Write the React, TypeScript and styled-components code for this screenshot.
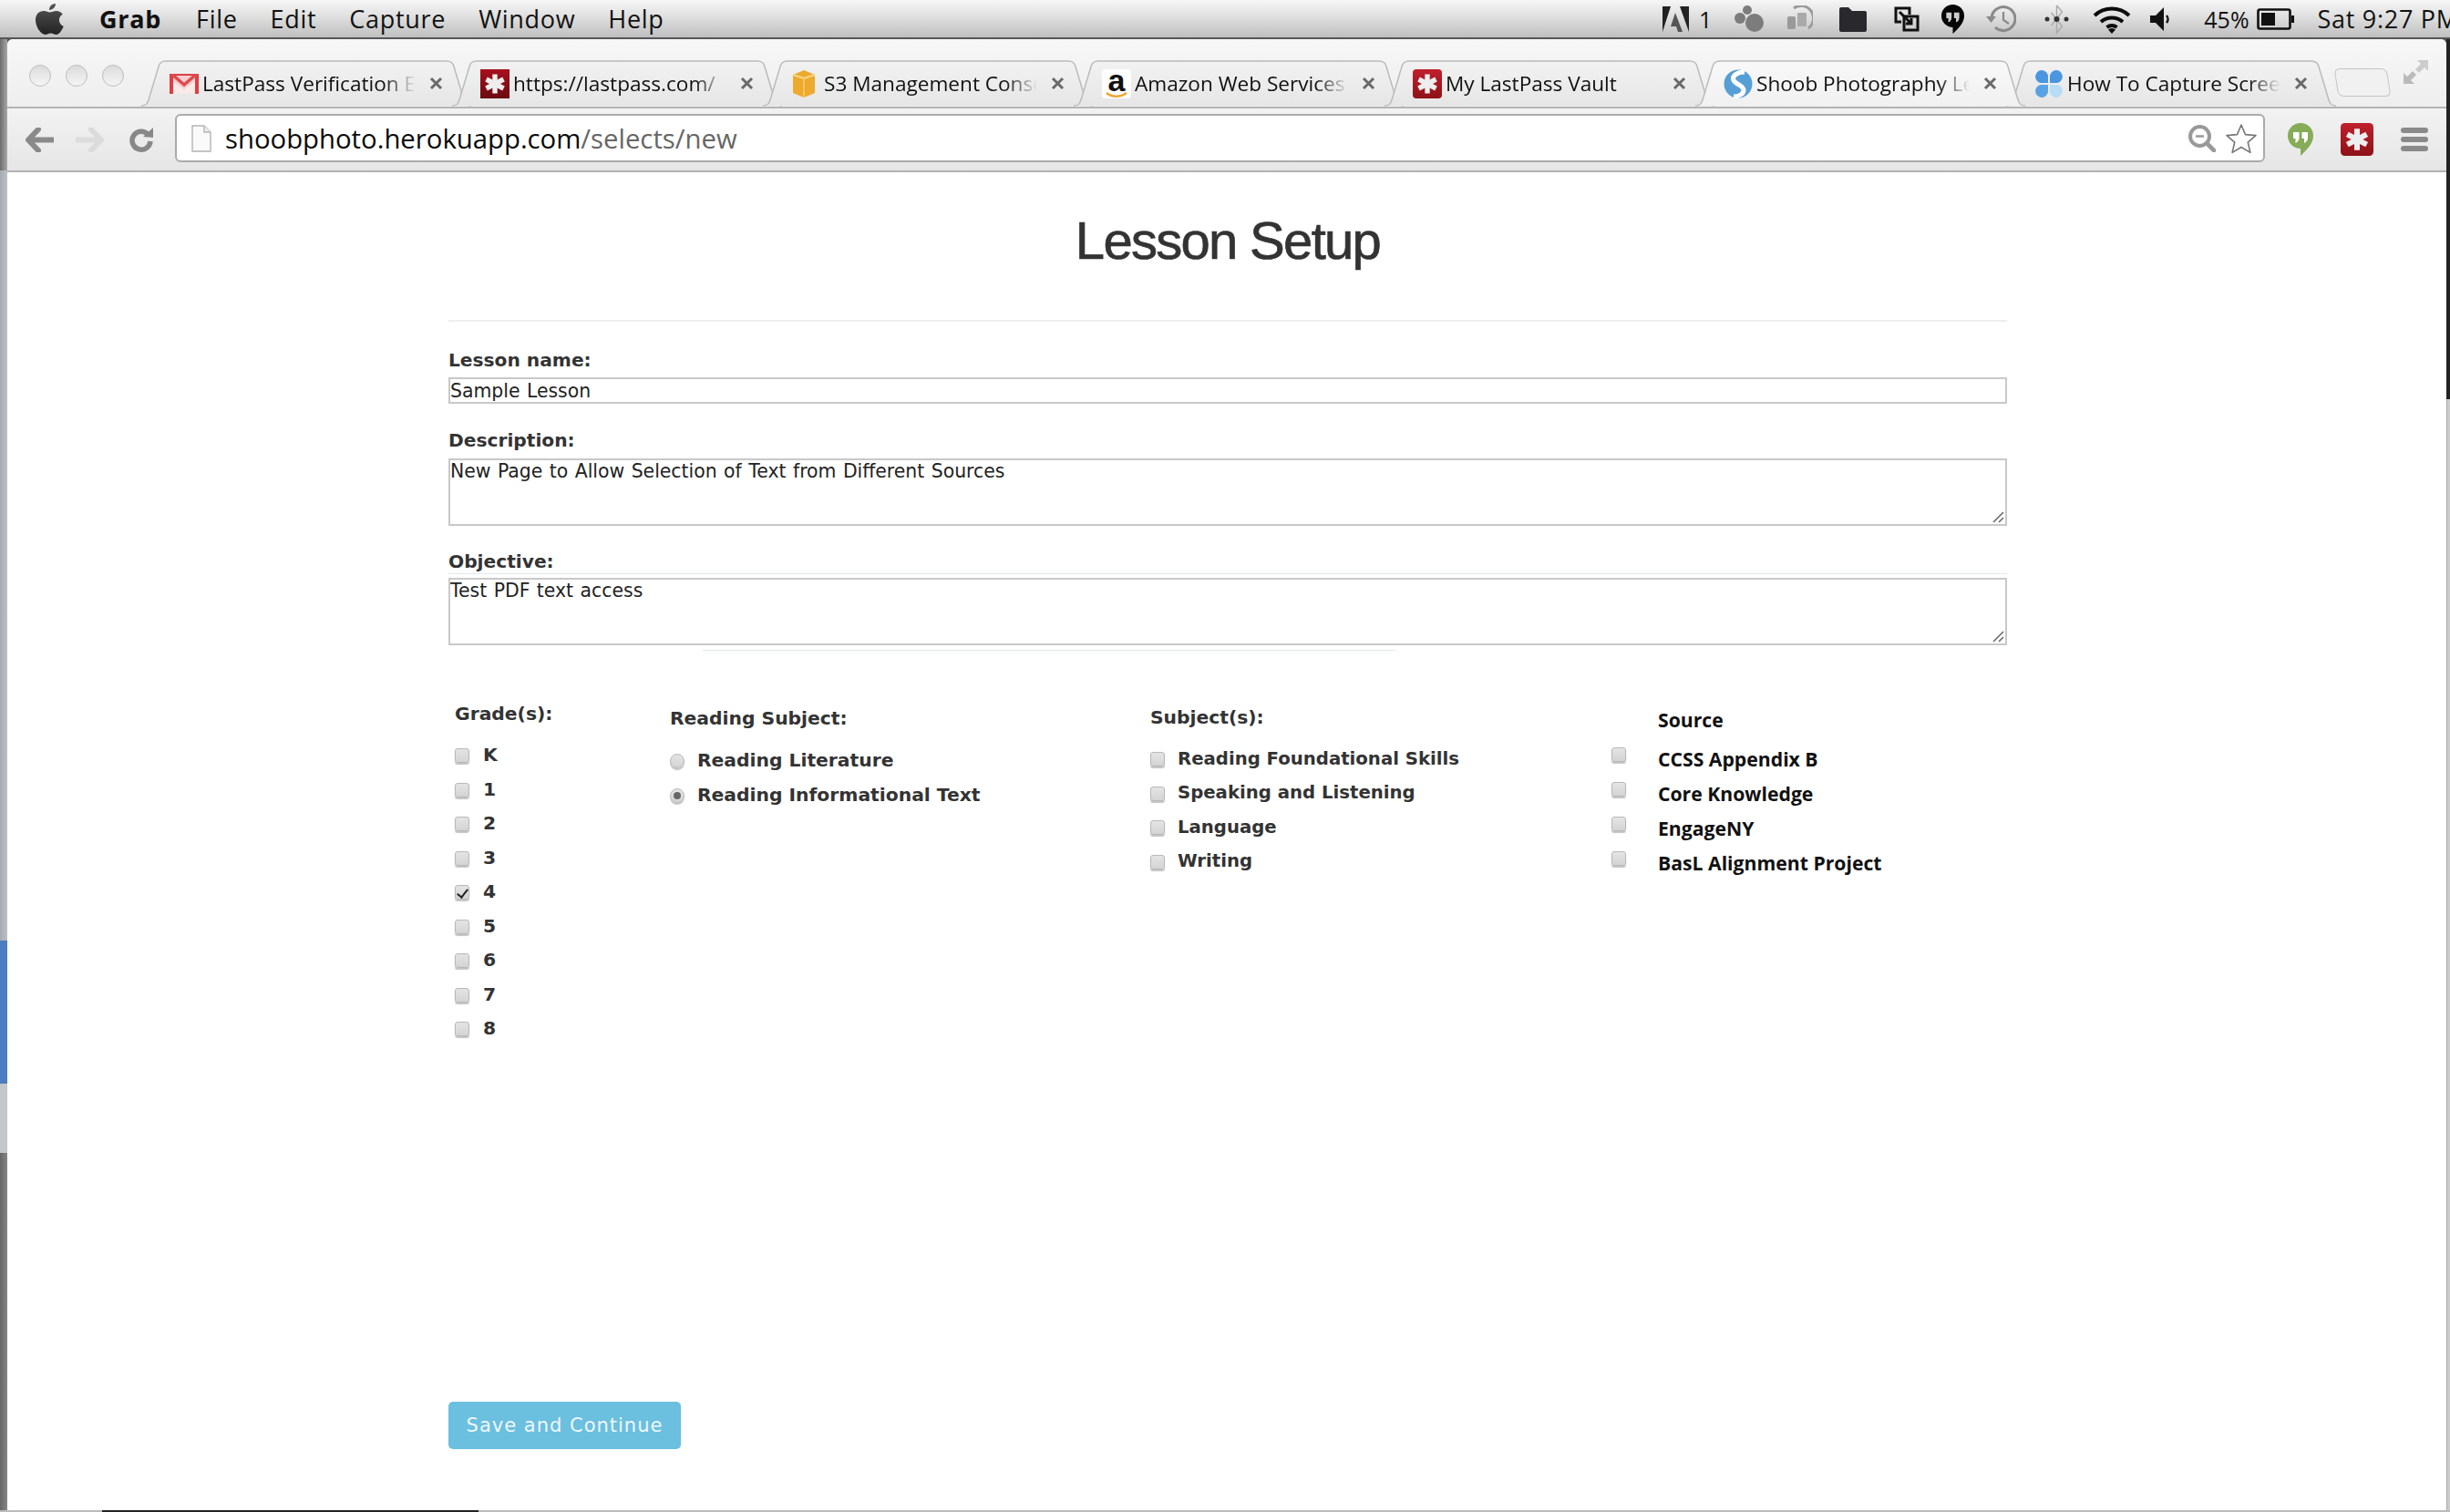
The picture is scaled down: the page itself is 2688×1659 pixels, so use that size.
import React from "react";
import styled, { createGlobalStyle } from "styled-components";

const GlobalStyle = createGlobalStyle`
  html, body {
    margin: 0;
    padding: 0;
    background: #555;
  }
  #root {
    width: 2688px;
    height: 1659px;
    overflow: hidden;
  }
  * {
    box-sizing: border-box;
  }
`;

const CHROME_FONT = `"Open Sans", "Noto Sans", sans-serif`;
const PAGE_FONT = `"DejaVu Sans", Verdana, sans-serif`;

/* ---------- icons ---------- */

function LastPassIcon({ size, square }: { size: number; square?: boolean }) {
  const id = square ? "lp-dark" : "lp-red";
  return (
    <svg width={size} height={size} viewBox="0 0 32 32">
      <defs>
        <linearGradient id={id} x1="0" y1="0" x2="0" y2="1">
          <stop offset="0" stopColor={square ? "#a8101c" : "#c0202c"} />
          <stop offset="1" stopColor={square ? "#6c0a10" : "#8e1218"} />
        </linearGradient>
      </defs>
      <rect width="32" height="32" rx={square ? 0 : 4} fill={`url(#${id})`} />
      <g stroke="#eee" strokeWidth="5.4" strokeLinecap="butt">
        <path d="M16 5.5v21" />
        <path d="M6.5 11l19 10" />
        <path d="M25.5 11l-19 10" />
      </g>
    </svg>
  );
}

function GmailIcon() {
  return (
    <svg width="32" height="22" viewBox="0 0 32 22">
      <rect width="32" height="22" fill="#f4cfcf" />
      <path d="M4 22V8l12 9 12-9v14" fill="#f9e9e9" />
      <path d="M0 0h4v22H0zM28 0h4v22h-4z" fill="#dc4044" />
      <path d="M0 0h32v2H0z" fill="#dc4044" />
      <path d="M2 0l14 12L30 0" fill="none" stroke="#e04a4e" strokeWidth="3.600" />
    </svg>
  );
}

function BoxIcon() {
  return (
    <svg width="28" height="32" viewBox="0 0 28 32">
      <path d="M2 6l12-5 12 5v20l-12 5-12-5z" fill="#edaa2e" />
      <path d="M2 6l12 4 12-4" fill="none" stroke="#f9d98a" strokeWidth="2" />
      <path d="M14 10v21" stroke="#f6c35c" strokeWidth="2" />
    </svg>
  );
}

function ShoobIcon() {
  return (
    <svg width="32" height="32" viewBox="0 0 32 32">
      <circle cx="16" cy="16" r="15.5" fill="#569fd6" />
      <path
        d="M23 3C15 3 9 7 11 12c2 5 11 5 11 11 0 4-5 7-11 7"
        fill="none"
        stroke="#fff"
        strokeWidth="5"
      />
    </svg>
  );
}

function PetalIcon() {
  return (
    <svg width="32" height="32" viewBox="0 0 32 32">
      <path d="M15 15H7a7 7 0 1 1 8-8z" fill="#4a96e0" />
      <path d="M17 15h8a7 7 0 1 0-8-8z" fill="#4a96e0" />
      <path d="M15 17H7a7 7 0 1 0 8 8z" fill="#5aa2e4" />
      <path d="M17 17h8a7 7 0 1 1-8 8z" fill="#b9dcf6" />
    </svg>
  );
}

function CloseIcon() {
  return (
    <svg width="15" height="15" viewBox="0 0 15 15">
      <path d="M2 2l11 11M13 2L2 13" stroke="#6a6a6a" strokeWidth="3" />
    </svg>
  );
}

function ArrowIcon({ flip, color }: { flip?: boolean; color: string }) {
  return (
    <svg
      width="31"
      height="27"
      viewBox="0 0 31 27"
      style={flip ? { transform: "scaleX(-1)" } : undefined}
    >
      <path
        d="M14 2L3 13.5 14 25M4 13.5h26"
        fill="none"
        stroke={color}
        strokeWidth="6"
        strokeLinejoin="round"
        strokeLinecap="round"
      />
    </svg>
  );
}

function ReloadIcon() {
  return (
    <svg width="27" height="28" viewBox="0 0 27 28">
      <path
        d="M20 8a10 10 0 1 0 3 8"
        fill="none"
        stroke="#888"
        strokeWidth="5.5"
      />
      <path d="M15 11L26 1v11z" fill="#888" />
    </svg>
  );
}

function PageIcon() {
  return (
    <svg width="22" height="30" viewBox="0 0 22 30">
      <path
        d="M1 1h13l7 7v21H1z"
        fill="#fafafa"
        stroke="#b4b4b4"
        strokeWidth="1.4"
      />
      <path d="M14 1v7h7" fill="#eee" stroke="#b4b4b4" strokeWidth="1.4" />
    </svg>
  );
}

function ZoomOutIcon() {
  return (
    <svg width="30" height="30" viewBox="0 0 30 30">
      <circle cx="12.5" cy="12.5" r="10.5" fill="none" stroke="#999" strokeWidth="4" />
      <path d="M8 12.5h9" stroke="#999" strokeWidth="2.4" />
      <path d="M20 20l8 8" stroke="#999" strokeWidth="4.6" strokeLinecap="round" />
    </svg>
  );
}

function StarIcon() {
  return (
    <svg width="36" height="34" viewBox="0 0 36 34">
      <path
        d="M18 2l4.5 10.6 11.5 1-8.700 7.600 2.600 11.200L18 26.500 8.100 32.400l2.600-11.200L2 13.600l11.500-1z"
        fill="#fff"
        stroke="#777"
        strokeWidth="1.6"
        strokeLinejoin="round"
      />
    </svg>
  );
}

function HangoutsIcon({ fill, mark, w, h }: { fill: string; mark: string; w: number; h: number }) {
  return (
    <svg width={w} height={h} viewBox="0 0 28 36">
      <path d="M14 0a14 14 0 0 1 14 14c0 8-6 14-13 21l-1 1V28A14 14 0 0 1 14 0z" fill={fill} />
      <path d="M6 10h6.500v6c0 3-1.500 5-4 6v-5H6zM15.500 10H22v6c0 3-1.500 5-4 6v-5h-2.500z" fill={mark} />
    </svg>
  );
}

function MenuIcon() {
  return (
    <svg width="30" height="28" viewBox="0 0 30 28">
      <rect y="1" width="30" height="6" rx="3" fill="#8a8a8a" />
      <rect y="11" width="30" height="6" rx="3" fill="#8a8a8a" />
      <rect y="21" width="30" height="6" rx="3" fill="#8a8a8a" />
    </svg>
  );
}

function ExpandIcon() {
  return (
    <svg width="29" height="28" viewBox="0 0 29 28">
      <path d="M16 1h12v12l-4-4-6 6-4-4 6-6z" fill="#ccc" />
      <path d="M1 27V15l4 4 6-6 4 4-6 6 4 4z" fill="#bbb" />
    </svg>
  );
}

function AppleIcon() {
  return (
    <svg width="31" height="35" viewBox="0 0 31 35">
      <defs>
        <linearGradient id="apple-shade" x1="0" y1="0" x2="0" y2="1">
          <stop offset="0" stopColor="#555" />
          <stop offset="1" stopColor="#222" />
        </linearGradient>
      </defs>
      <path
        d="M22 1c.3 3-2.800 7-7 7 0-4 3-7 7-7zM9 9c3 0 4.500 1.600 6.500 1.600S20 9 23 9c2.500 0 5 1.200 6.700 3.600-5.500 3.300-4.700 11 1 13.400-2 4.500-4.700 9-8 9-2.300 0-3.200-1.500-6-1.500s-3.800 1.500-6 1.500C5.700 35 0 26 0 19 0 12.500 4 9 9 9z"
        fill="url(#apple-shade)"
      />
    </svg>
  );
}

function AdobeIcon() {
  return (
    <svg width="29" height="30" viewBox="0 0 29 30">
      <path d="M0 1h9L0 29z" fill="#222" />
      <path d="M19 1h10v28z" fill="#222" />
      <path d="M14 8l8 21h-5l-2-6h-6z" fill="#555" />
    </svg>
  );
}

function ClusterIcon() {
  return (
    <svg width="33" height="32" viewBox="0 0 33 32">
      <g fill="#7c7c7c">
        <circle cx="15" cy="6" r="5" />
        <circle cx="7" cy="15" r="6" />
        <circle cx="23" cy="20" r="10" />
      </g>
    </svg>
  );
}

function SyncWatchIcon() {
  return (
    <svg width="29" height="30" viewBox="0 0 29 30">
      <path d="M8 3a13 13 0 0 1 16 22" fill="none" stroke="#9a9a9a" strokeWidth="3" />
      <rect x="1" y="12" width="9" height="14" rx="2" fill="#9a9a9a" />
      <rect x="12" y="8" width="10" height="15" rx="1" fill="#aaa" />
    </svg>
  );
}

function FolderIcon() {
  return (
    <svg width="30" height="28" viewBox="0 0 30 28">
      <path d="M0 3a2 2 0 0 1 2-2h8l4 4h14a2 2 0 0 1 2 2v19a2 2 0 0 1-2 2H2a2 2 0 0 1-2-2z" fill="#29282c" />
    </svg>
  );
}

function TransferIcon() {
  return (
    <svg width="28" height="28" viewBox="0 0 28 28">
      <g fill="none" stroke="#111" strokeWidth="3">
        <path d="M8 17H2V2h15v7" />
        <path d="M11 11h15v15H11z" />
        <path d="M6 6l13 13M19 13v6h-6" />
      </g>
    </svg>
  );
}

function TimeMachineIcon() {
  return (
    <svg width="33" height="32" viewBox="0 0 33 32">
      <path d="M6 15a13 13 0 1 1 4 10" fill="none" stroke="#8a8a8a" strokeWidth="3" />
      <path d="M0 13h11l-5.500 7z" fill="#8a8a8a" />
      <path d="M19 8v9l6 4" fill="none" stroke="#8a8a8a" strokeWidth="2.200" />
    </svg>
  );
}

function BluetoothIcon() {
  return (
    <svg width="27" height="34" viewBox="0 0 27 34">
      <path d="M13.500 2v30l6-7-12-15M13.500 2l6 7-12 15" fill="none" stroke="#aaa" strokeWidth="1.400" />
      <circle cx="3" cy="17" r="2.500" fill="#333" />
      <circle cx="13.500" cy="17" r="3" fill="#333" />
      <circle cx="24" cy="17" r="2.500" fill="#333" />
    </svg>
  );
}

function WifiIcon() {
  return (
    <svg width="42" height="32" viewBox="0 0 42 32">
      <g fill="none" stroke="#0c0c0c" strokeWidth="4">
        <path d="M2 12a28 28 0 0 1 38 0" />
        <path d="M9 19a18 18 0 0 1 24 0" />
        <path d="M15.500 25a9 9 0 0 1 11 0" />
      </g>
      <path d="M21 32l-4-4.500a6 6 0 0 1 8 0z" fill="#0c0c0c" />
    </svg>
  );
}

function SpeakerIcon() {
  return (
    <svg width="24" height="28" viewBox="0 0 24 28">
      <path d="M1 10h6l9-9v26l-9-9H1z" fill="#111" />
      <path d="M19 10a6 6 0 0 1 0 8" fill="none" stroke="#111" strokeWidth="2.500" />
    </svg>
  );
}

function BatteryIcon() {
  return (
    <svg width="42" height="24" viewBox="0 0 42 24">
      <rect x="1.500" y="1.500" width="35" height="21" rx="2" fill="none" stroke="#111" strokeWidth="2.600" />
      <rect x="5" y="5" width="15" height="14" fill="#111" />
      <rect x="38" y="8" width="3" height="8" fill="#111" />
    </svg>
  );
}

function AmazonIcon() {
  return (
    <AmazonMark>
      a
      <svg width="24" height="7" viewBox="0 0 24 7">
        <path d="M1 1c6 5 15 5 22 0" fill="none" stroke="#eda62e" strokeWidth="2.400" />
      </svg>
    </AmazonMark>
  );
}

function GripIcon() {
  return (
    <GripMark width="14" height="14" viewBox="0 0 14 14">
      <path d="M2 13L13 2M8 13l5-5" stroke="#666" strokeWidth="1.500" />
    </GripMark>
  );
}

function TabShape({ active }: { active?: boolean }) {
  const id = active ? "tab-on" : "tab-off";
  return (
    <TabBack viewBox="0 0 362 51" preserveAspectRatio="none">
      <defs>
        <linearGradient id={id} x1="0" y1="0" x2="0" y2="1">
          <stop offset="0" stopColor={active ? "#f8f8f8" : "#f2f2f2"} />
          <stop offset="1" stopColor={active ? "#f1f1f1" : "#e6e6e6"} />
        </linearGradient>
      </defs>
      <path
        d="M0 50c6 0 7-3 8.500-8L19 7c1-4 3-6 8-6h308c5 0 7 2 8 6l10.500 35c1.500 5 2.500 8 8.500 8"
        fill={`url(#${id})`}
        stroke="#bbb"
        strokeWidth="1.500"
      />
    </TabBack>
  );
}

/* ---------- page ---------- */

export default function App() {
  return (
    <>
      <GlobalStyle />
      <MenuBar>
        <AppleSlot>
          <AppleIcon />
        </AppleSlot>
        <AppName>Grab</AppName>
        <MenuItem>File</MenuItem>
        <MenuItem>Edit</MenuItem>
        <MenuItem>Capture</MenuItem>
        <MenuItem>Window</MenuItem>
        <MenuItem>Help</MenuItem>
        <StatusGroup>
          <StatusSlot $gap={0}><AdobeIcon /></StatusSlot>
          <StatusText $gap={11}>1</StatusText>
          <StatusSlot $gap={24}><ClusterIcon /></StatusSlot>
          <StatusSlot $gap={25}><SyncWatchIcon /></StatusSlot>
          <StatusSlot $gap={29}><FolderIcon /></StatusSlot>
          <StatusSlot $gap={30}><TransferIcon /></StatusSlot>
          <StatusSlot $gap={24}><HangoutsIcon fill="#050505" mark="#ccc" w={25} h={34} /></StatusSlot>
          <StatusSlot $gap={24}><TimeMachineIcon /></StatusSlot>
          <StatusSlot $gap={31}><BluetoothIcon /></StatusSlot>
          <StatusSlot $gap={26}><WifiIcon /></StatusSlot>
          <StatusSlot $gap={20}><SpeakerIcon /></StatusSlot>
          <StatusText $gap={36}>45%</StatusText>
          <StatusSlot $gap={8}><BatteryIcon /></StatusSlot>
          <ClockText $gap={25}>Sat 9:27 PM</ClockText>
        </StatusGroup>
      </MenuBar>

      <Desktop>
        <LeftStrip>
          <StripPart $h={144} $bg="linear-gradient(90deg,#6d6d6d,#a8a8a8)" />
          <StripPart $h={845} $bg="linear-gradient(90deg,#a6abb2,#bcc0c6)" />
          <StripPart $h={157} $bg="#4c7dc0" />
          <StripPart $h={76} $bg="#c3c6cb" />
          <StripPart $bg="linear-gradient(90deg,#666,#858585)" />
        </LeftStrip>

        <BrowserWindow>
          <TabStrip>
            <TrafficLights>
              <Light />
              <Light />
              <Light />
            </TrafficLights>
            <Tabs>
              {TABS.map((tab) => (
                <Tab key={tab.title} $active={tab.active}>
                  <TabShape active={tab.active} />
                  <TabIcon>{tab.icon}</TabIcon>
                  <TabTitle>{tab.title}</TabTitle>
                  <TabClose>
                    <CloseIcon />
                  </TabClose>
                </Tab>
              ))}
              <NewTab />
            </Tabs>
            <ExpandSlot>
              <ExpandIcon />
            </ExpandSlot>
          </TabStrip>

          <Toolbar>
            <NavButton $w={55}><ArrowIcon color="#8a8a8a" /></NavButton>
            <NavButton $w={59}><ArrowIcon flip color="#dcdcdc" /></NavButton>
            <NavButton $w={50}><ReloadIcon /></NavButton>
            <Omnibox>
              <PageIcon />
              <UrlText>
                shoobphoto.herokuapp.com<UrlPath>/selects/new</UrlPath>
              </UrlText>
              <OmniIcons>
                <ZoomOutIcon />
                <StarIcon />
              </OmniIcons>
            </Omnibox>
            <ExtensionIcons>
              <HangoutsIcon fill="#86ac58" mark="#fff" w={28} h={36} />
              <LastPassIcon size={36} />
              <MenuIcon />
            </ExtensionIcons>
          </Toolbar>

          <Content>
            <Title>Lesson Setup</Title>

            <FieldLabel $top={30}>Lesson name:</FieldLabel>
            <TextInput readOnly defaultValue="Sample Lesson" />

            <FieldLabel $top={28}>Description:</FieldLabel>
            <AreaWrap $top={8}>
              <TextArea readOnly defaultValue="New Page to Allow Selection of Text from Different Sources" />
              <GripIcon />
            </AreaWrap>

            <FieldLabel $top={27}>Objective:</FieldLabel>
            <FaintRule $top={1} $left={0} $right={0} />
            <AreaWrap $top={4}>
              <TextArea readOnly defaultValue="Test PDF text access" />
              <GripIcon />
            </AreaWrap>
            <FaintRule $top={5} $left={279} $right={671} />

            <Columns>
              <Column $top={57}>
                <ColumnHeading>Grade(s):</ColumnHeading>
                <OptionList $top={14.25} $pitch={37.5}>
                  {GRADES.map((grade) => (
                    <Option key={grade} $gap={15}>
                      <CheckBox type="checkbox" readOnly checked={grade === "4"} />
                      {grade}
                    </Option>
                  ))}
                </OptionList>
              </Column>

              <Column $top={62}>
                <ColumnHeading>Reading Subject:</ColumnHeading>
                <OptionList $top={15} $pitch={38}>
                  {READING.map((name, i) => (
                    <Option key={name} $gap={14}>
                      <RadioDot type="radio" readOnly checked={i === 1} />
                      {name}
                    </Option>
                  ))}
                </OptionList>
              </Column>

              <Column $top={61}>
                <ColumnHeading>Subject(s):</ColumnHeading>
                <OptionList $top={14.8} $pitch={37.4}>
                  {SUBJECTS.map((name) => (
                    <Option key={name} $gap={14} $size={19.7}>
                      <CheckBox type="checkbox" readOnly />
                      {name}
                    </Option>
                  ))}
                </OptionList>
              </Column>

              <Column $top={64}>
                <SourceHeading>Source</SourceHeading>
                <OptionList $top={11} $pitch={38}>
                  {SOURCES.map((name) => (
                    <SourceOption key={name}>
                      <SourceBox type="checkbox" readOnly />
                      {name}
                    </SourceOption>
                  ))}
                </OptionList>
              </Column>
            </Columns>

            <SaveButton>Save and Continue</SaveButton>
          </Content>
        </BrowserWindow>

        <RightStrip>
          <RightDark />
        </RightStrip>
      </Desktop>

      <BottomEdge>
        <BottomShadow />
      </BottomEdge>
    </>
  );
}

/* ---------- menu bar ---------- */

const MenuBar = styled.header`
  height: 43px;
  display: flex;
  align-items: center;
  overflow: hidden;
  background: linear-gradient(#f6f6f6, #e2e2e2 40%, #bfbfbf);
  border-bottom: 2px solid #55555a;
  font-family: ${CHROME_FONT};
  font-size: 27px;
  letter-spacing: 0.7px;
  color: #111;
`;

const AppleSlot = styled.span`
  display: flex;
  margin-left: 39px;
  width: 70px;
`;

const AppName = styled.span`
  font-weight: 700;
  margin-right: 38px;
`;

const MenuItem = styled.span`
  margin-right: 36px;
`;

const StatusGroup = styled.div`
  margin-left: auto;
  flex: 0 0 864px;
  min-width: 0;
  display: flex;
  align-items: center;
  white-space: nowrap;
  letter-spacing: 0;
`;

const StatusSlot = styled.span<{ $gap: number }>`
  display: flex;
  flex: none;
  margin-left: ${(p) => p.$gap}px;
`;

const StatusText = styled.span<{ $gap: number }>`
  flex: none;
  margin-left: ${(p) => p.$gap}px;
  font-size: 25px;
`;

const ClockText = styled(StatusText)`
  font-size: 27px;
  letter-spacing: 0.7px;
`;

/* ---------- browser frame ---------- */

const Desktop = styled.div`
  display: flex;
  height: 1614px;
`;

const LeftStrip = styled.div`
  flex: 0 0 8px;
  display: flex;
  flex-direction: column;
`;

const StripPart = styled.div<{ $h?: number; $bg: string }>`
  flex: ${(p) => (p.$h ? `0 0 ${p.$h}px` : 1)};
  background: ${(p) => p.$bg};
`;

const RightStrip = styled.div`
  flex: 0 0 4px;
  background: #cccccc;
  border-left: 1px solid #aaa;
`;

const RightDark = styled.div`
  height: 395px;
  margin-left: -1px;
  background: #222;
`;

const BottomEdge = styled.div`
  height: 2px;
  background: #bbb;
`;

const BottomShadow = styled.div`
  margin-left: 112px;
  width: 413px;
  height: 2px;
  background: #222;
`;

const BrowserWindow = styled.main`
  flex: 1;
  min-width: 0;
  display: flex;
  flex-direction: column;
  background: #fff;
  border-radius: 6px 6px 0 0;
  overflow: hidden;
`;

const TabStrip = styled.div`
  flex: 0 0 74px;
  display: flex;
  background: linear-gradient(#f7f7f7, #eeeeee);
  border-bottom: 2px solid #b4b4b4;
`;

const TrafficLights = styled.div`
  flex: 0 0 147px;
  display: flex;
  gap: 16px;
  padding: 28px 0 0 24px;
`;

const Light = styled.span`
  width: 24px;
  height: 24px;
  border-radius: 50%;
  background: linear-gradient(#dcdcdc, #f4f4f4);
  border: 1.5px solid #bdbdbd;
`;

const Tabs = styled.div`
  display: flex;
  padding-top: 23px;
`;

const Tab = styled.div<{ $active?: boolean }>`
  position: relative;
  z-index: ${(p) => (p.$active ? 2 : 1)};
  flex: 0 0 341px;
  height: 51px;
  display: flex;
  align-items: center;
  padding: 0 0 0 31px;
  font-family: ${CHROME_FONT};
  font-size: 22.6px;
  color: #111;
`;

const TabBack = styled.svg`
  position: absolute;
  left: 0;
  top: 0;
  width: 362px;
  height: 51px;
`;

const TabIcon = styled.span`
  position: relative;
  flex: 0 0 36px;
  display: flex;
`;

const TabTitle = styled.span`
  position: relative;
  flex: 0 0 234px;
  overflow: hidden;
  white-space: nowrap;
  mask-image: linear-gradient(90deg, #000 85%, transparent 100%);
`;

const TabClose = styled.span`
  position: relative;
  display: flex;
  margin-left: 15px;
`;

const AmazonMark = styled.span`
  width: 32px;
  height: 32px;
  display: flex;
  flex-direction: column;
  align-items: center;
  background: #fff;
  border-radius: 4px;
  font-family: "Liberation Sans", sans-serif;
  font-size: 34px;
  font-weight: 700;
  line-height: 25px;
  color: #111;
`;

const NewTab = styled.span`
  margin: 9px 0 0 21px;
  flex: 0 0 58px;
  height: 31px;
  background: #f1f1f1;
  border: 1.5px solid #c4c4c4;
  border-radius: 6px;
  transform: skewX(9deg);
`;

const ExpandSlot = styled.span`
  position: absolute;
  left: 2636px;
  top: 65px;
  display: flex;
`;

const Toolbar = styled.div`
  flex: 0 0 70px;
  display: flex;
  align-items: center;
  padding-left: 20px;
  background: linear-gradient(#f2f2f2, #e6e6e6);
  border-bottom: 2px solid #b2b2b2;
`;

const NavButton = styled.span<{ $w: number }>`
  flex: 0 0 ${(p) => p.$w}px;
  display: flex;
`;

const Omnibox = styled.div`
  flex: 0 0 2293px;
  height: 53px;
  margin-top: -3px;
  display: flex;
  align-items: center;
  padding: 0 6px 0 16px;
  background: #fff;
  border: 2px solid #aaa;
  border-radius: 6px;
`;

const UrlText = styled.span`
  margin-left: 15px;
  font-family: ${CHROME_FONT};
  font-size: 29.3px;
  color: #0a0a0a;
`;

const UrlPath = styled.span`
  color: #666;
`;

const OmniIcons = styled.span`
  margin-left: auto;
  display: flex;
  align-items: center;
  gap: 10px;
`;

const ExtensionIcons = styled.div`
  display: flex;
  align-items: center;
  padding-left: 25px;
  gap: 30px;
`;

/* ---------- lesson form ---------- */

const Content = styled.section`
  width: 2194px;
  padding-left: 484px;
  font-family: ${PAGE_FONT};
  color: #333;
`;

const Title = styled.h1`
  margin: 0;
  height: 164px;
  padding-top: 45px;
  border-bottom: 2px solid #eeeeee;
  text-align: center;
  font-family: "Liberation Sans", Arial, sans-serif;
  font-size: 58px;
  font-weight: 400;
  line-height: 60px;
  letter-spacing: -1.7px;
  color: #333;
  -webkit-text-stroke: 0.7px #333;
`;

const FieldLabel = styled.label<{ $top: number }>`
  display: block;
  margin-top: ${(p) => p.$top}px;
  height: 24px;
  font-size: 20.2px;
  font-weight: 700;
  line-height: 24px;
`;

const fieldText = `
  display: block;
  width: 100%;
  padding: 0;
  background: #fff;
  border: 2px solid #c8c8c8;
  font-family: ${PAGE_FONT};
  font-size: 20.4px;
  word-spacing: 1px;
  line-height: 24px;
  color: #222;
  outline: none;
`;

const TextInput = styled.input`
  ${fieldText}
  margin-top: 7px;
  height: 29px;
`;

const AreaWrap = styled.div<{ $top: number }>`
  position: relative;
  margin-top: ${(p) => p.$top}px;
`;

const TextArea = styled.textarea`
  ${fieldText}
  height: 74px;
  overflow: hidden;
  resize: none;
`;

const GripMark = styled.svg`
  position: absolute;
  right: 3px;
  bottom: 3px;
`;

const FaintRule = styled.div<{ $top: number; $left: number; $right: number }>`
  height: 1px;
  margin: ${(p) => p.$top}px ${(p) => p.$right}px 0 ${(p) => p.$left}px;
  background: #dfe8f4;
`;

const Columns = styled.div`
  margin: 0 0 0 7px;
  height: 824px;
  display: grid;
  grid-template-columns: 236px 527px 506px 1fr;
`;

const Column = styled.div<{ $top: number }>`
  padding-top: ${(p) => p.$top}px;
`;

const ColumnHeading = styled.div`
  height: 24px;
  font-size: 20.3px;
  font-weight: 700;
  line-height: 24px;
`;

const SourceHeading = styled.div`
  height: 24px;
  padding-left: 51px;
  font-family: "Open Sans", sans-serif;
  font-size: 21.2px;
  font-weight: 700;
  line-height: 24px;
  color: #111;
`;

const OptionList = styled.div<{ $top: number; $pitch: number }>`
  margin-top: ${(p) => p.$top}px;
  display: grid;
  grid-auto-rows: ${(p) => p.$pitch}px;
`;

const Option = styled.label<{ $gap: number; $size?: number }>`
  display: flex;
  align-items: center;
  gap: ${(p) => p.$gap}px;
  font-size: ${(p) => p.$size ?? 20.3}px;
  font-weight: 700;
`;

const SourceOption = styled.label`
  display: flex;
  align-items: center;
  gap: 35px;
  font-family: "Open Sans", sans-serif;
  font-size: 21.2px;
  font-weight: 700;
  color: #111;
`;

const CheckBox = styled.input`
  appearance: none;
  position: relative;
  flex: none;
  width: 16px;
  height: 16px;
  margin: 2px 0 0;
  background: linear-gradient(#e4e4e4, #d4d4d4);
  border: 1px solid #b8b8b8;
  border-radius: 3px;
  box-shadow: 0 2px 1px #c4c4c4;

  &:checked::after {
    content: "";
    position: absolute;
    left: 4px;
    top: 1px;
    width: 5px;
    height: 10px;
    border: solid #222;
    border-width: 0 2px 2px 0;
    transform: rotate(38deg);
  }
`;

const RadioDot = styled(CheckBox)`
  border-radius: 50%;

  &:checked::after {
    left: 3px;
    top: 3px;
    width: 8px;
    height: 8px;
    border: 0;
    border-radius: 50%;
    background: #666;
    transform: none;
  }
`;

const SourceBox = styled(CheckBox)`
  margin-top: -8px;
`;

const SaveButton = styled.button`
  display: block;
  width: 255px;
  height: 52px;
  padding: 0;
  background: #6bbfdf;
  border: 0;
  border-radius: 5px;
  font-family: ${PAGE_FONT};
  font-size: 21px;
  letter-spacing: 1px;
  color: #eef8fc;
`;

/* ---------- data ---------- */

const TABS: { title: string; icon: React.ReactNode; active?: boolean }[] = [
  { title: "LastPass Verification Email", icon: <GmailIcon /> },
  { title: "https://lastpass.com/", icon: <LastPassIcon size={32} square /> },
  { title: "S3 Management Console", icon: <BoxIcon /> },
  { title: "Amazon Web Services", icon: <AmazonIcon /> },
  { title: "My LastPass Vault", icon: <LastPassIcon size={32} /> },
  { title: "Shoob Photography Lesson", icon: <ShoobIcon />, active: true },
  { title: "How To Capture Screen", icon: <PetalIcon /> },
];

const GRADES = ["K", "1", "2", "3", "4", "5", "6", "7", "8"];
const READING = ["Reading Literature", "Reading Informational Text"];
const SUBJECTS = [
  "Reading Foundational Skills",
  "Speaking and Listening",
  "Language",
  "Writing",
];
const SOURCES = ["CCSS Appendix B", "Core Knowledge", "EngageNY", "BasL Alignment Project"];
